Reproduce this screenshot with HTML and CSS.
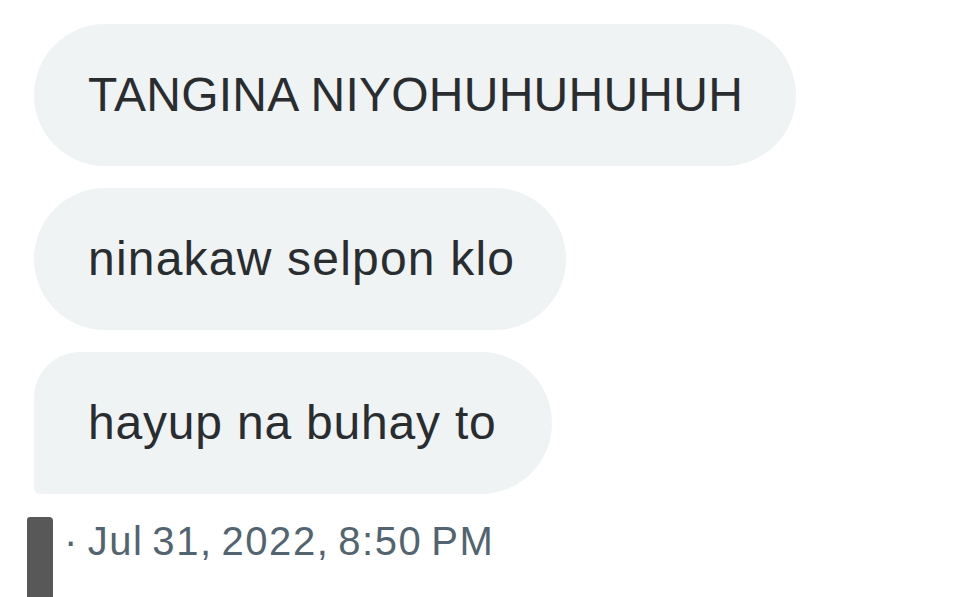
FILE: index.html
```html
<!DOCTYPE html>
<html lang="tl">
<head>
<meta charset="utf-8">
<title>Messages</title>
<link rel="stylesheet" href="styles.css">
</head>
<body>
  <main class="thread">
    <div class="messages">
      <div class="bubble bubble--caps">TANGINA NIYOHUHUHUHUH</div>
      <div class="bubble bubble--mid">ninakaw selpon klo</div>
      <div class="bubble bubble--last">hayup na buhay to</div>
    </div>
    <div class="meta">
      <span class="meta-bar"></span>
      <span class="meta-time">· Jul 31, 2022, 8:50 PM</span>
    </div>
  </main>
</body>
</html>
```
FILE: styles.css
```css
html, body {
  margin: 0;
  padding: 0;
  background: #ffffff;
}

body {
  width: 967px;
  height: 597px;
  overflow: hidden;
  font-family: "Liberation Sans", Arial, sans-serif;
}

.thread {
  display: flex;
  flex-direction: column;
  padding-top: 24px;
}

.messages {
  display: flex;
  flex-direction: column;
  align-items: flex-start;
  gap: 22px;
  padding-left: 34px;
}

.bubble {
  background: #eff3f4;
  color: #2a2d30;
  font-size: 48px;
  line-height: 58px;
  padding: 42px 53px 42px 54px;
  border-radius: 71px;
  white-space: nowrap;
  letter-spacing: 1.2px;
}

.bubble--caps {
  letter-spacing: 0.25px;
}

.bubble--mid {
  padding-right: 51px;
  letter-spacing: 1.2px;
}

.bubble--last {
  letter-spacing: 0.8px;
  padding-right: 55px;
  border-radius: 46px 71px 71px 6px;
}

.meta {
  display: flex;
  align-items: flex-start;
  gap: 11px;
  margin-top: 23px;
  padding-left: 27px;
}

.meta-bar {
  display: block;
  width: 26px;
  height: 80px;
  background: #585858;
  border-radius: 3px 4px 0 0;
}

.meta-time {
  color: #536471;
  font-size: 40px;
  line-height: 48px;
  letter-spacing: 1.6px;
  word-spacing: -4px;
  white-space: nowrap;
}
```
